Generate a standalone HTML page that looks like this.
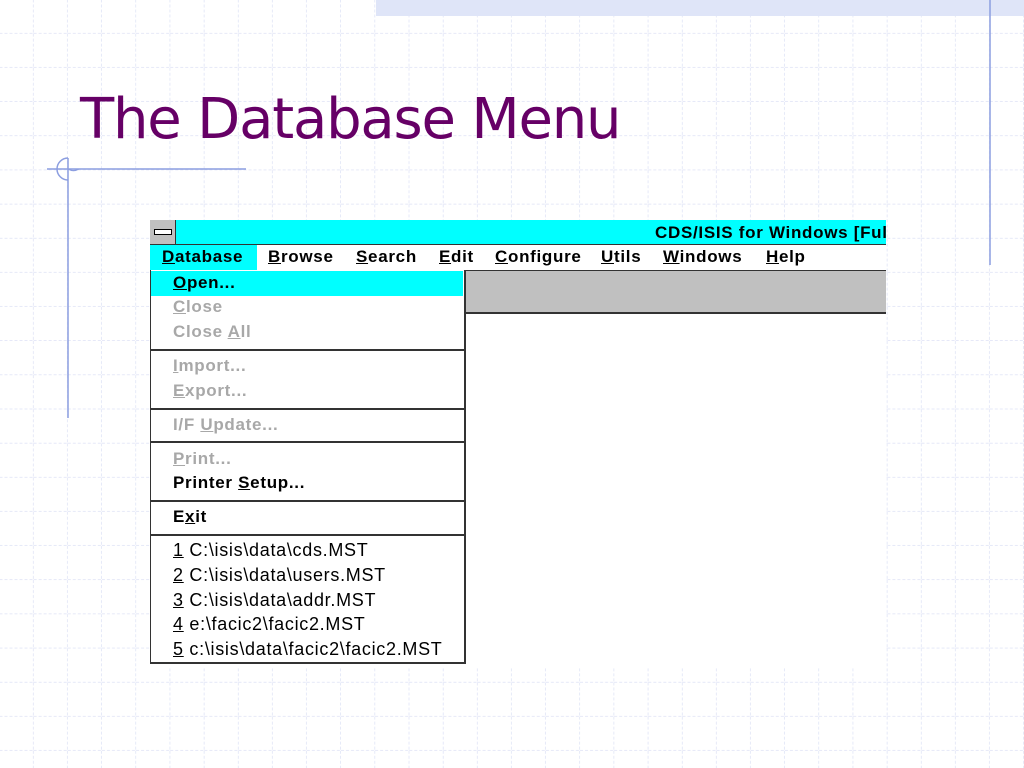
<!DOCTYPE html>
<html><head><meta charset="utf-8"><style>
body{margin:0;width:1024px;height:768px;overflow:hidden;background:#fff;position:relative;font-family:"Liberation Sans",sans-serif}
.a{position:absolute}
.m{position:absolute;font-weight:bold;font-size:17px;letter-spacing:0.7px;color:#000;white-space:nowrap;line-height:20px}
.g{color:#a8a8a8}
.n{position:absolute;font-size:18px;letter-spacing:0.7px;white-space:nowrap;line-height:20px}
.sep{position:absolute;left:151px;width:313px;height:2px;background:#333}
</style></head><body>
<svg class="a" style="left:0;top:0" width="1024" height="768">
<defs><pattern id="p" x="-0.5" y="-0.5" width="34.15" height="34.15" patternUnits="userSpaceOnUse">
<path d="M34.15 0V34.15M0 34.15H34.15" stroke="#d6dbf3" stroke-width="1.2" stroke-dasharray="3 2" fill="none"/></pattern></defs>
<rect width="1024" height="768" fill="url(#p)"/>
<rect x="376" y="0" width="648" height="16" fill="#dfe5f8"/>
<line x1="990" y1="0" x2="990" y2="265" stroke="#8c9ee0" stroke-width="1.5"/>
<line x1="68" y1="158" x2="68" y2="418" stroke="#8c9ee0" stroke-width="1.5"/>
<line x1="47" y1="169" x2="246" y2="169" stroke="#8c9ee0" stroke-width="1.5"/>
<path d="M68 158A11 11 0 0 0 68 180" stroke="#8c9ee0" stroke-width="1.5" fill="none"/>
<path d="M68 169A11 11 0 0 0 79 169" stroke="#8c9ee0" stroke-width="1.2" fill="none"/>
</svg>
<div class="a" style="left:80px;top:85px;font-size:56px;color:#660066;font-family:'DejaVu Sans','Liberation Sans',sans-serif;letter-spacing:-1.2px;line-height:70px;white-space:nowrap">The Database Menu</div>

<div class="a" style="left:150px;top:220px;width:736px;height:448px;background:#fff"></div>
<div class="a" style="left:150px;top:220px;width:736px;height:24px;background:#00ffff;overflow:hidden">
<div class="m" style="left:505px;top:3px">CDS/ISIS for Windows [Full</div></div>
<div class="a" style="left:150px;top:220px;width:25px;height:24px;background:#c0c0c0;border-right:1px solid #333"></div>
<div class="a" style="left:154px;top:229px;width:16px;height:4px;border:1px solid #000;background:#fff"></div>
<div class="a" style="left:150px;top:244px;width:736px;height:1px;background:#333"></div>
<div class="a" style="left:150px;top:245px;width:107px;height:25px;background:#00ffff"></div>
<div class="m" style="left:162px;top:247px"><u>D</u>atabase</div>
<div class="m" style="left:268px;top:247px"><u>B</u>rowse</div>
<div class="m" style="left:356px;top:247px"><u>S</u>earch</div>
<div class="m" style="left:439px;top:247px"><u>E</u>dit</div>
<div class="m" style="left:495px;top:247px"><u>C</u>onfigure</div>
<div class="m" style="left:601px;top:247px"><u>U</u>tils</div>
<div class="m" style="left:663px;top:247px"><u>W</u>indows</div>
<div class="m" style="left:766px;top:247px"><u>H</u>elp</div>
<div class="a" style="left:464px;top:270px;width:422px;height:41px;background:#c0c0c0;border-top:1px solid #333;border-bottom:2px solid #333"></div>

<div class="a" style="left:150px;top:270px;width:313px;height:392px;background:#fff;border:1px solid #333;border-top:none;border-bottom:2px solid #333;border-right:2px solid #333"></div>
<div class="a" style="left:151px;top:271px;width:312px;height:25px;background:#00ffff"></div>
<div class="m" style="left:173px;top:273px"><u>O</u>pen...</div>
<div class="m g" style="left:173px;top:297px"><u>C</u>lose</div>
<div class="m g" style="left:173px;top:322px">Close <u>A</u>ll</div>
<div class="sep" style="top:349px"></div>
<div class="m g" style="left:173px;top:356px"><u>I</u>mport...</div>
<div class="m g" style="left:173px;top:381px"><u>E</u>xport...</div>
<div class="sep" style="top:408px"></div>
<div class="m g" style="left:173px;top:415px">I/F <u>U</u>pdate...</div>
<div class="sep" style="top:441px"></div>
<div class="m g" style="left:173px;top:449px"><u>P</u>rint...</div>
<div class="m" style="left:173px;top:473px">Printer <u>S</u>etup...</div>
<div class="sep" style="top:500px"></div>
<div class="m" style="left:173px;top:507px">E<u>x</u>it</div>
<div class="sep" style="top:534px"></div>
<div class="n" style="left:173px;top:540px"><u>1</u> C:\isis\data\cds.MST</div>
<div class="n" style="left:173px;top:565px"><u>2</u> C:\isis\data\users.MST</div>
<div class="n" style="left:173px;top:590px"><u>3</u> C:\isis\data\addr.MST</div>
<div class="n" style="left:173px;top:614px"><u>4</u> e:\facic2\facic2.MST</div>
<div class="n" style="left:173px;top:639px"><u>5</u> c:\isis\data\facic2\facic2.MST</div>
</body></html>
